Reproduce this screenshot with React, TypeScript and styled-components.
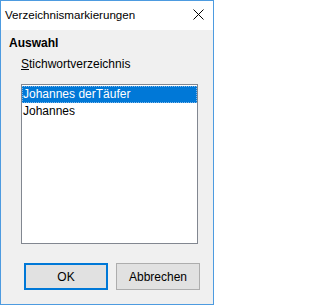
import React from "react";
import styled, { createGlobalStyle } from "styled-components";

const Global = createGlobalStyle`
  html, body { margin: 0; padding: 0; background: #ffffff; }
  * { box-sizing: border-box; }
`;

const Window = styled.div`
  width: 214px;
  height: 305px;
  border: 1px solid #4d9be0;
  background: #f0f0f0;
  display: flex;
  flex-direction: column;
  font-family: "Liberation Sans", Arial, sans-serif;
  font-size: 12px;
  color: #000;
`;

const TitleBar = styled.div`
  height: 29px;
  background: #ffffff;
  display: flex;
  align-items: center;
  justify-content: space-between;
  padding: 0 9px 3px 4px;
`;

const Title = styled.span`
  font-size: 11.6px;
  line-height: 16px;
  margin-top: 2px;
`;

const CloseIcon = styled.svg`
  width: 11px;
  height: 11px;
  display: block;
`;

const Body = styled.div`
  flex: 1;
  display: flex;
  flex-direction: column;
  padding: 5px 8px 0 8px;
`;

const Heading = styled.div`
  font-weight: bold;
  line-height: 16px;
`;

const Indent = styled.div`
  padding-left: 12px;
  padding-right: 7px;
  display: flex;
  flex-direction: column;
`;

const FieldLabel = styled.div`
  line-height: 16px;
  margin-top: 5px;
`;

const Listbox = styled.div`
  margin-top: 12px;
  height: 160px;
  border: 1px solid #828790;
  background: #ffffff;
  padding: 1px 0;
`;

const Item = styled.div<{ $selected?: boolean }>`
  height: 17px;
  line-height: 17px;
  padding-left: 1px;
  white-space: nowrap;
  background: ${(p) => (p.$selected ? "#0078d7" : "transparent")};
  color: ${(p) => (p.$selected ? "#ffffff" : "#000000")};
  outline: ${(p) => (p.$selected ? "1px dotted #7fb8ea" : "none")};
  outline-offset: -1px;
`;

const ButtonRow = styled.div`
  display: flex;
  justify-content: flex-end;
  gap: 8px;
  margin-top: 19px;
  padding-right: 5px;
`;

const Button = styled.div<{ $default?: boolean }>`
  width: 84px;
  height: 27px;
  display: flex;
  align-items: center;
  justify-content: center;
  background: #e1e1e1;
  border: ${(p) => (p.$default ? "2px solid #0078d7" : "1px solid #adadad")};
  font-size: 12px;
`;

export default function App() {
  return (
    <>
      <Global />
      <Window>
        <TitleBar>
          <Title>Verzeichnismarkierungen</Title>
          <CloseIcon viewBox="0 0 11 11">
            <path d="M0.5 0.5 L10.5 10.5 M10.5 0.5 L0.5 10.5" stroke="#000" strokeWidth="1" />
          </CloseIcon>
        </TitleBar>
        <Body>
          <Heading>Auswahl</Heading>
          <Indent>
            <FieldLabel>
              <u>S</u>tichwortverzeichnis
            </FieldLabel>
            <Listbox>
              <Item $selected>Johannes derTäufer</Item>
              <Item>Johannes</Item>
            </Listbox>
          </Indent>
          <ButtonRow>
            <Button $default>OK</Button>
            <Button>Abbrechen</Button>
          </ButtonRow>
        </Body>
      </Window>
    </>
  );
}
